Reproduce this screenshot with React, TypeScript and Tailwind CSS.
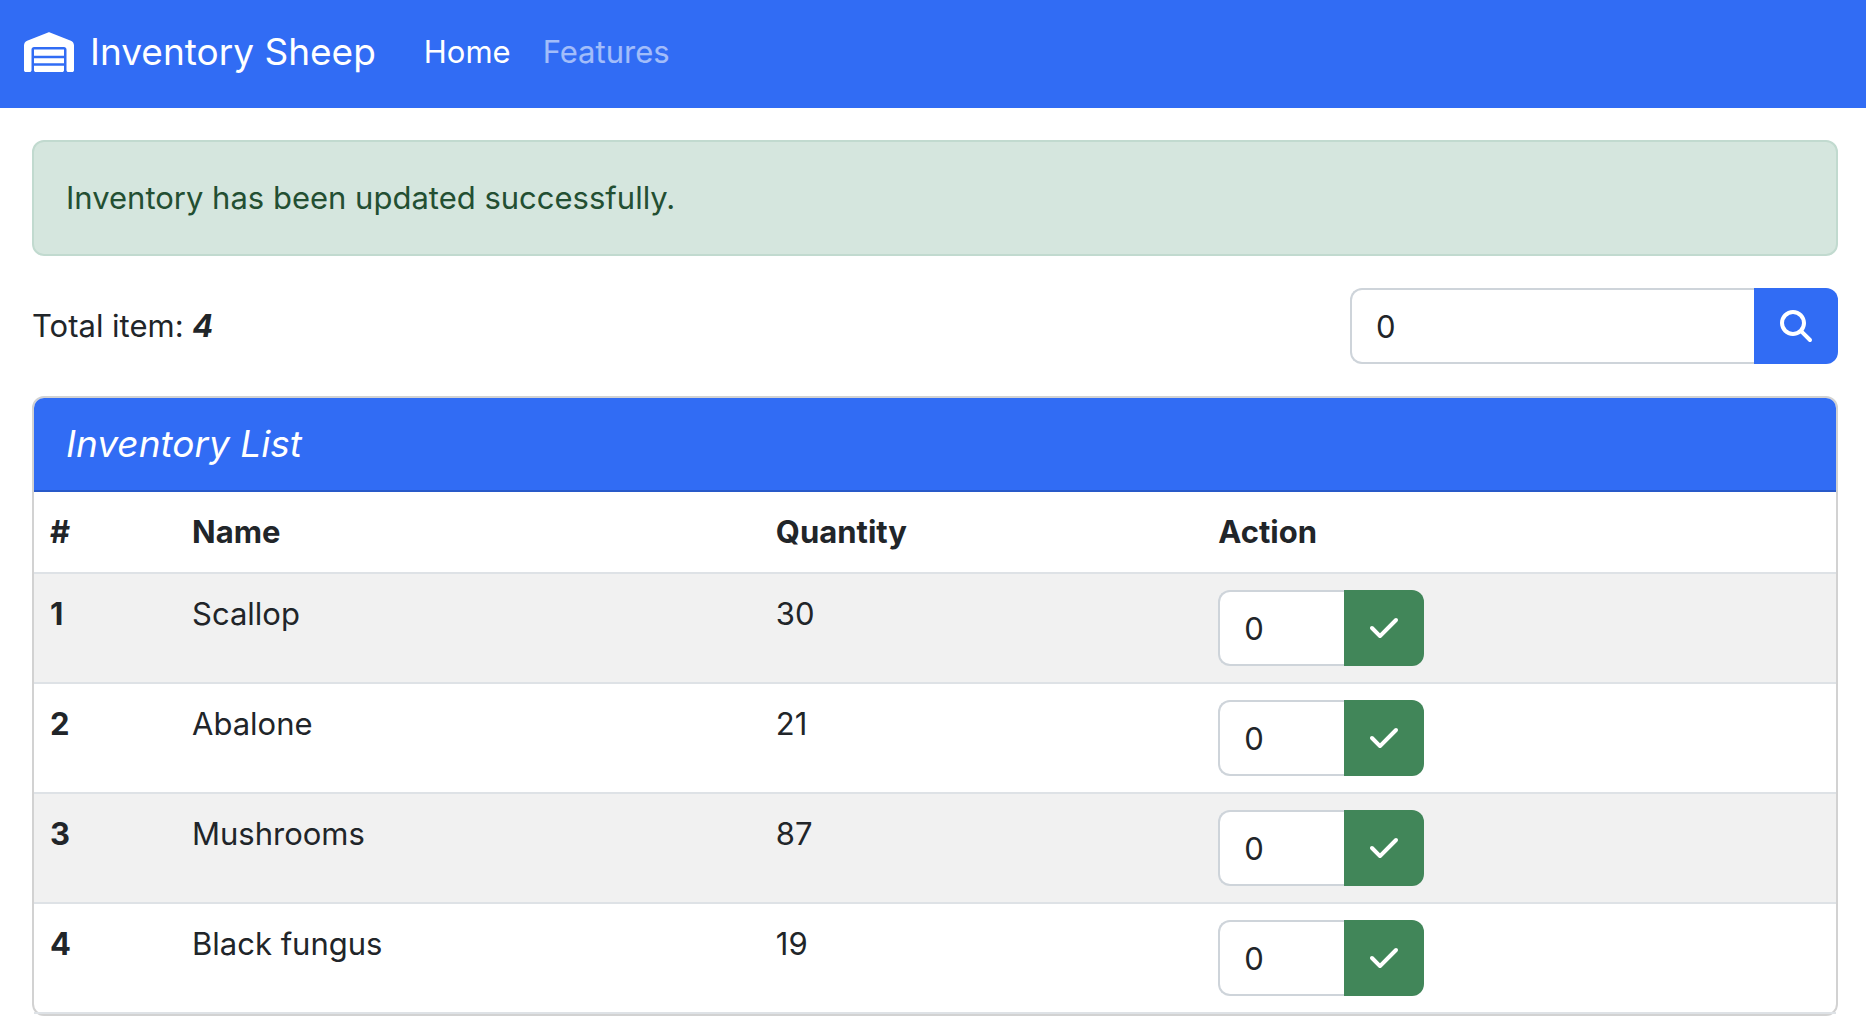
import { FaCheck, FaMagnifyingGlass, FaWarehouse } from "react-icons/fa6";

const items = [
  { id: 1, name: "Scallop", quantity: 30 },
  { id: 2, name: "Abalone", quantity: 21 },
  { id: 3, name: "Mushrooms", quantity: 87 },
  { id: 4, name: "Black fungus", quantity: 19 },
];

function Navbar() {
  return (
    <nav className="flex items-center bg-[#316cf4] px-6 pt-[14px] pb-[18px] text-white">
      <a href="#" className="flex items-center gap-4 py-2 text-[37px] leading-[60px]">
        <FaWarehouse className="size-[50px]" />
        Inventory Sheep
      </a>
      <div className="ml-8 flex leading-12">
        <a href="#" className="px-4 py-3">Home</a>
        <a href="#features" className="px-4 py-3 text-white/55">Features</a>
      </div>
    </nav>
  );
}

function SearchForm() {
  return (
    <form className="flex w-[488px] max-w-full" onSubmit={(e) => e.preventDefault()}>
      <input
        type="text"
        aria-label="Search inventory"
        defaultValue="0"
        className="h-[76px] min-w-0 flex-1 rounded-l-xl border-2 border-r-0 border-[#ced4da] bg-white px-6"
      />
      <button
        type="submit"
        aria-label="Search"
        className="flex h-[76px] w-[84px] items-center justify-center rounded-r-xl bg-[#316cf4] text-white"
      >
        <FaMagnifyingGlass className="size-8" />
      </button>
    </form>
  );
}

function QuantityForm({ name }: { name: string }) {
  return (
    <form className="flex" onSubmit={(e) => e.preventDefault()}>
      <input
        type="text"
        inputMode="numeric"
        aria-label={`Quantity change for ${name}`}
        defaultValue="0"
        className="h-[76px] w-[126px] rounded-l-xl border-2 border-r-0 border-[#ced4da] bg-white px-6"
      />
      <button
        type="submit"
        aria-label={`Update ${name}`}
        className="flex h-[76px] w-20 items-center justify-center rounded-r-xl bg-[#418659] text-white"
      >
        <FaCheck className="size-8" />
      </button>
    </form>
  );
}

function InventoryTable() {
  return (
    <table className="w-full table-fixed border-collapse text-left align-top">
      <colgroup>
        <col className="w-[142px]" />
        <col className="w-[32.4%]" />
        <col className="w-[24.55%]" />
        <col />
      </colgroup>
      <thead>
        <tr className="shadow-[inset_0_-2px_0_#dee2e6]">
          <th scope="col" className="px-4 pt-4 pb-[18px]">#</th>
          <th scope="col" className="px-4 pt-4 pb-[18px]">Name</th>
          <th scope="col" className="px-4 pt-4 pb-[18px]">Quantity</th>
          <th scope="col" className="px-4 pt-4 pb-[18px]">Action</th>
        </tr>
      </thead>
      <tbody>
        {items.map((item) => (
          <tr key={item.id} className="align-top shadow-[inset_0_-2px_0_#dee2e6] odd:bg-[#f1f1f1]">
            <th scope="row" className="px-4 pt-4 pb-[18px]">{item.id}</th>
            <td className="px-4 pt-4 pb-[18px]">{item.name}</td>
            <td className="px-4 pt-4 pb-[18px]">{item.quantity}</td>
            <td className="px-4 pt-4 pb-[18px]">
              <QuantityForm name={item.name} />
            </td>
          </tr>
        ))}
      </tbody>
    </table>
  );
}

export default function App() {
  return (
    <div className="bg-white font-['Inter',sans-serif] text-[31px] leading-12 text-[#212529]">
      <Navbar />
      <main className="flex flex-col gap-8 pt-8 pr-7 pb-4 pl-8">
        <div role="alert" className="rounded-xl border-2 border-[#c1dacf] bg-[#d5e6de] px-8 py-8 text-[#234f32]">
          Inventory has been updated successfully.
        </div>
        <div className="flex items-center justify-between">
          <p>
            Total item: <em className="font-bold">4</em>
          </p>
          <SearchForm />
        </div>
        <section className="rounded-xl border-2 border-[#d2d2d2]">
          <h1 className="rounded-t-[10px] border-b-2 border-[#2859c9] bg-[#316cf4] px-8 py-4 text-[37px] leading-[60px] text-white italic">
            Inventory List
          </h1>
          <InventoryTable />
        </section>
      </main>
    </div>
  );
}
